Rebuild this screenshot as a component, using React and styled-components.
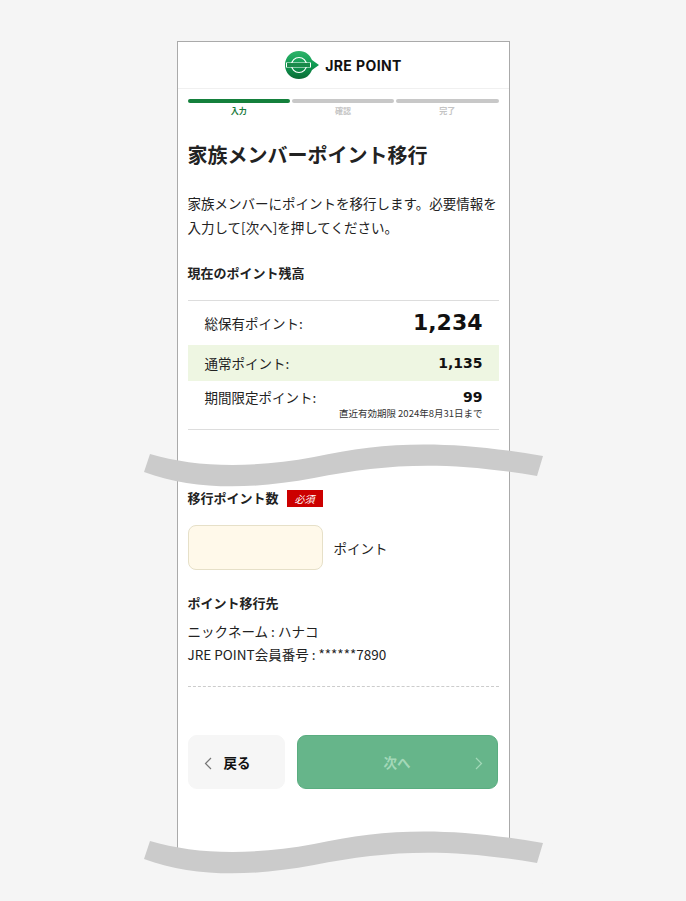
import React from "react";
import styled, { createGlobalStyle } from "styled-components";

const Global = createGlobalStyle`
  html, body {
    margin: 0;
    padding: 0;
    background: #f5f5f5;
  }
  * { box-sizing: border-box; }
`;

const FONT = `"DejaVu Sans", "Noto Sans CJK JP", sans-serif`;
const JP = `"Noto Sans CJK JP", sans-serif`;

const Page = styled.div`
  width: 686px;
  height: 901px;
  padding-top: 41px;
  display: flex;
  justify-content: center;
  overflow: hidden;
  font-family: ${JP};
  color: #222;
`;
const Phone = styled.div`
  position: relative;
  width: 333px;
  height: 820px;
  background: #fff;
  border: 1px solid #aaa;
  border-bottom: none;
`;
const Header = styled.div`
  height: 47px;
  display: flex;
  align-items: center;
  justify-content: center;
  gap: 5px;
  border-bottom: 1px solid #f0f0f0;
`;
const LogoText = styled.span`
  font-family: "Inter", sans-serif;
  font-weight: 700;
  font-size: 14px;
  letter-spacing: 0.4px;
  color: #111;
`;
const Content = styled.div`
  padding: 10px 10px 0 10px;
`;
const Steps = styled.div`
  display: grid;
  grid-template-columns: repeat(3, 1fr);
  gap: 2px;
`;
const Step = styled.div`
  display: flex;
  flex-direction: column;
  align-items: center;
  gap: 3px;
  font-size: 8px;
  line-height: 10px;
  font-weight: 700;
  color: ${(p) => (p.$active ? "#1a7a3c" : "#c4c4c4")};
  &::before {
    content: "";
    display: block;
    width: 100%;
    height: 4px;
    border-radius: 2px;
    background: ${(p) => (p.$active ? "#14803c" : "#c8c8c8")};
  }
`;
const Title = styled.h1`
  margin: 24px 0 0;
  font-size: 20px;
  line-height: 30px;
  font-weight: 700;
  color: #222;
`;
const Lead = styled.p`
  margin: 21px 0 0;
  font-size: 13.5px;
  line-height: 24px;
`;
const Heading = styled.h2`
  margin: ${(p) => p.$top || 0}px 0 0;
  font-size: 13px;
  line-height: 20px;
  font-weight: 700;
  color: #222;
`;
const Balance = styled.div`
  margin-top: 17px;
  border-top: 1px solid #ddd;
  border-bottom: 1px solid #ddd;
`;
const Row = styled.div`
  display: flex;
  justify-content: space-between;
  align-items: ${(p) => (p.$top ? "flex-start" : "center")};
  height: ${(p) => p.$h}px;
  padding: ${(p) => (p.$top ? "6px" : "0")} 16px 0 17px;
  background: ${(p) => p.$bg || "transparent"};
  font-size: 13.5px;
`;
const Amount = styled.div`
  font-family: ${FONT};
  font-weight: 700;
  font-size: ${(p) => p.$size}px;
  color: #111;
  text-align: right;
  line-height: ${(p) => (p.$size > 20 ? 30 : 20)}px;
`;
const Expiry = styled.div`
  font-family: ${JP};
  font-weight: 400;
  font-size: 9.5px;
  line-height: 12px;
  color: #333;
  white-space: nowrap;
`;
const FieldLabel = styled.div`
  margin-top: 58px;
  display: flex;
  align-items: center;
  gap: 8px;
`;
const Badge = styled.span`
  width: 36px;
  height: 17px;
  background: #cc0000;
  color: #fff;
  font-family: "Noto Sans CJK JP", serif;
  font-size: 10px;
  font-style: italic;
  display: flex;
  align-items: center;
  justify-content: center;
`;
const InputRow = styled.div`
  margin-top: 17px;
  display: flex;
  align-items: center;
  gap: 11px;
  font-size: 13.5px;
`;
const PointInput = styled.input`
  width: 135px;
  height: 45px;
  background: #fff9ea;
  border: 1px solid #e6e0c8;
  border-radius: 8px;
  outline: none;
`;
const Info = styled.div`
  margin-top: 7px;
  font-size: 13.5px;
  line-height: 23px;
`;
const Divider = styled.div`
  margin-top: 20px;
  border-top: 1px dashed #ccc;
`;
const Buttons = styled.div`
  margin-top: 48px;
  display: grid;
  grid-template-columns: 97px 201px;
  gap: 12px;
`;
const Button = styled.div`
  position: relative;
  height: 54px;
  border-radius: 9px;
  display: flex;
  align-items: center;
  justify-content: center;
  font-size: 13.5px;
  font-weight: 700;
  background: ${(p) => (p.$primary ? "#66b58a" : "#f6f6f6")};
  border: 1px solid ${(p) => (p.$primary ? "#5aad80" : "#f6f6f6")};
  color: ${(p) => (p.$primary ? "#a3d8b8" : "#111")};
  padding-left: ${(p) => (p.$primary ? 0 : 2)}px;
  svg {
    position: absolute;
    top: 21px;
    ${(p) => (p.$primary ? "right: 14px;" : "left: 15px;")}
  }
`;
const Tear = styled.svg`
  position: absolute;
  left: -34px;
  top: ${(p) => p.$top}px;
  pointer-events: none;
`;

const Logo = () => (
  <svg width="36" height="30" viewBox="0 0 36 30">
    <defs>
      <linearGradient id="jre" x1="0" y1="0" x2="0" y2="1">
        <stop offset="0" stopColor="#2fb36a" />
        <stop offset="0.5" stopColor="#0f9a52" />
        <stop offset="1" stopColor="#0a6a34" />
      </linearGradient>
    </defs>
    <path d="M15 1 C22 1 26 5 28 10 L35 15 L28 20 C26 25 22 29 15 29 C7 29 1 23 1 15 C1 7 7 1 15 1 Z" fill="url(#jre)" />
    <circle cx="15" cy="15" r="7.5" fill="none" stroke="#fff" strokeWidth="1.2" />
    <rect x="2" y="12.5" width="25" height="5" fill="#fff" />
    <rect x="3" y="13" width="23" height="4" fill="#1a8a4a" />
  </svg>
);

const Chevron = ({ dir, color }) => (
  <svg width="8" height="13" viewBox="0 0 8 13" fill="none" stroke={color} strokeWidth="1.2">
    <path d={dir === "left" ? "M7 1 L1.5 6.5 L7 12" : "M1 1 L6.5 6.5 L1 12"} />
  </svg>
);

const WaveBand = ({ top, cover }) => (
  <Tear $top={top} width="400" height="70" viewBox="0 0 400 70" $cover={cover}>
    {cover && (
      <path d="M0 34 C50 50 105 50 170 38 C240 24 300 20 393 36 L400 70 L0 70 Z" fill="#f5f5f5" />
    )}
    <path
      d="M6 14 C50 27 105 29 170 17 C240 2 300 -1 399 16 L393 36 C300 20 240 24 170 38 C105 50 50 50 0 32 Z"
      transform="translate(0 6)"
      fill="#cbcbcb"
    />
  </Tear>
);

export default function App() {
  return (
    <Page>
      <Global />
      <Phone>
        <Header>
          <Logo />
          <LogoText>JRE POINT</LogoText>
        </Header>
        <Content>
          <Steps>
            <Step $active>入力</Step>
            <Step>確認</Step>
            <Step>完了</Step>
          </Steps>
          <Title>家族メンバーポイント移行</Title>
          <Lead>家族メンバーにポイントを移行します。必要情報を入力して[次へ]を押してください。</Lead>
          <Heading $top={24}>現在のポイント残高</Heading>
          <Balance>
            <Row $h={44}>
              <span>総保有ポイント:</span>
              <Amount $size={22}>1,234</Amount>
            </Row>
            <Row $h={36} $bg="#eef6e2">
              <span>通常ポイント:</span>
              <Amount $size={14}>1,135</Amount>
            </Row>
            <Row $h={48} $top>
              <span>期間限定ポイント:</span>
              <Amount $size={14}>
                99
                <Expiry>直近有効期限 2024年8月31日まで</Expiry>
              </Amount>
            </Row>
          </Balance>
          <FieldLabel>
            <Heading>移行ポイント数</Heading>
            <Badge>必須</Badge>
          </FieldLabel>
          <InputRow>
            <PointInput />
            ポイント
          </InputRow>
          <Heading $top={23}>ポイント移行先</Heading>
          <Info>
            ニックネーム : ハナコ
            <br />
            JRE POINT会員番号 : ******7890
          </Info>
          <Divider />
          <Buttons>
            <Button>
              <Chevron dir="left" color="#777" />
              戻る
            </Button>
            <Button $primary>
              次へ
              <Chevron dir="right" color="#a3d8b8" />
            </Button>
          </Buttons>
        </Content>
        <WaveBand top={392} />
        <WaveBand top={779} cover />
      </Phone>
    </Page>
  );
}
